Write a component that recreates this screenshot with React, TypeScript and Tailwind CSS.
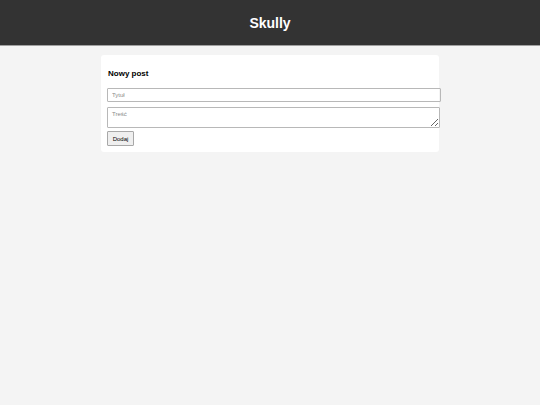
import React from "react";

export default function App() {
  return (
    <div
      className="min-h-[405px] bg-[#f4f4f4]"
      style={{ fontFamily: '"Liberation Sans", Arial, sans-serif' }}
    >
      <header className="h-[46px] bg-[#333333] border-b border-[#a0a0a0] flex items-center justify-center">
        <h1 className="text-white font-bold text-[14px] leading-none">Skully</h1>
      </header>
      <main className="w-[338px] mx-auto mt-[9px] bg-white rounded-[3px] px-[6px] pt-[15px] pb-[6px]">
        <h2 className="text-[8px] font-bold leading-none text-black pl-[1px]">Nowy post</h2>
        <form className="flex flex-col mt-[10px]">
          <input
            type="text"
            placeholder="Tytuł"
            className="w-[334px] h-[14px] border border-[#b8b8b8] rounded-[1px] px-[4px] text-[6px] placeholder:text-[#8a8a8a] outline-none"
          />
          <textarea
            placeholder="Treść"
            className="w-[333px] h-[21px] mt-[5px] border border-[#b8b8b8] rounded-[1px] px-[4px] py-[3px] text-[6px] leading-[7px] placeholder:text-[#8a8a8a] outline-none resize-y block"
          />
          <button
            type="button"
            className="w-[27px] h-[15px] mt-[3px] bg-[#efefef] border border-[#a8a8a8] rounded-[1px] text-[6px] text-black leading-none"
          >
            Dodaj
          </button>
        </form>
      </main>
    </div>
  );
}
